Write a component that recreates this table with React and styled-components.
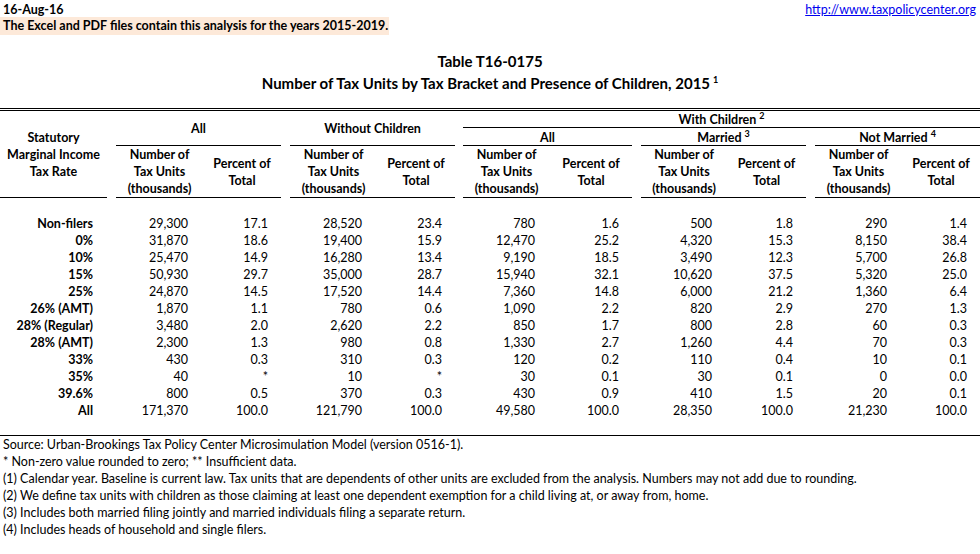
import React from 'react';
import styled, { createGlobalStyle } from 'styled-components';

const Global = createGlobalStyle`
  html, body { margin: 0; padding: 0; background: #fff; }
  body {
    font-family: Lato, "Liberation Sans", sans-serif;
    font-size: 12.5px;
    color: #000;
  }
`;

const Page = styled.div`
  width: 980px;
  height: 554px;
  overflow: hidden;
`;

const TopBar = styled.div`
  display: flex;
  justify-content: space-between;
  align-items: flex-end;
  height: 17px;
  line-height: 14px;
  padding: 0 4px 0 3px;
`;

const DateText = styled.span`
  font-weight: 700;
`;

const SiteLink = styled.a`
  color: #0000ee;
  text-decoration: underline;
`;

const Note = styled.div`
  display: inline-block;
  background: #fde9d9;
  font-weight: 700;
  height: 18px;
  line-height: 17px;
  padding: 0 1px 0 3px;
`;

const TitleBlock = styled.div`
  margin: 15px 0 14px;
  text-align: center;
  font-weight: 700;
  font-size: 15px;
  line-height: 22px;
`;

const Sup = styled.sup`
  font-size: 9px;
  line-height: 0;
  vertical-align: super;
  margin-left: 3px;
`;

const Table = styled.table`
  width: 980px;
  table-layout: fixed;
  border-collapse: separate;
  border-spacing: 0;
  border-top: 3px double #000;
`;

const Col = styled.col`
  width: ${p => p.$w}px;
`;

const HeadRow = styled.tr`
  height: ${p => p.$h}px;
`;

const Th = styled.th`
  padding: 0;
  font-weight: 700;
  text-align: center;
  line-height: ${p => p.$lh || 17}px;
  vertical-align: ${p => p.$va || 'middle'};
  border-bottom: ${p => (p.$rule ? '1px solid #000' : 'none')};
  white-space: nowrap;
`;

const Row = styled.tr`
  height: 17px;
`;

const Label = styled.td`
  padding: 0 14px 0 0;
  font-weight: 700;
  text-align: right;
  line-height: 17px;
  white-space: nowrap;
`;

const Num = styled.td`
  padding: 0 ${p => (p.$pct ? 13 : 15)}px 0 0;
  text-align: right;
  line-height: 17px;
  white-space: nowrap;
`;

const Gap = styled.td`
  padding: 0;
`;

const Footer = styled.div`
  margin-top: 16px;
  border-top: 1px solid #000;
  padding-left: 3px;
  line-height: 17px;
  white-space: nowrap;
`;

const widths = [107, 9, 87, 78, 9, 87, 78, 8, 87, 82, 9, 86, 79, 9, 87, 78];

const rows = [
  ['Non-filers', '29,300', '17.1', '28,520', '23.4', '780', '1.6', '500', '1.8', '290', '1.4'],
  ['0%', '31,870', '18.6', '19,400', '15.9', '12,470', '25.2', '4,320', '15.3', '8,150', '38.4'],
  ['10%', '25,470', '14.9', '16,280', '13.4', '9,190', '18.5', '3,490', '12.3', '5,700', '26.8'],
  ['15%', '50,930', '29.7', '35,000', '28.7', '15,940', '32.1', '10,620', '37.5', '5,320', '25.0'],
  ['25%', '24,870', '14.5', '17,520', '14.4', '7,360', '14.8', '6,000', '21.2', '1,360', '6.4'],
  ['26% (AMT)', '1,870', '1.1', '780', '0.6', '1,090', '2.2', '820', '2.9', '270', '1.3'],
  ['28% (Regular)', '3,480', '2.0', '2,620', '2.2', '850', '1.7', '800', '2.8', '60', '0.3'],
  ['28% (AMT)', '2,300', '1.3', '980', '0.8', '1,330', '2.7', '1,260', '4.4', '70', '0.3'],
  ['33%', '430', '0.3', '310', '0.3', '120', '0.2', '110', '0.4', '10', '0.1'],
  ['35%', '40', '*', '10', '*', '30', '0.1', '30', '0.1', '0', '0.0'],
  ['39.6%', '800', '0.5', '370', '0.3', '430', '0.9', '410', '1.5', '20', '0.1'],
  ['All', '171,370', '100.0', '121,790', '100.0', '49,580', '100.0', '28,350', '100.0', '21,230', '100.0'],
];

const notes = [
  'Source: Urban-Brookings Tax Policy Center Microsimulation Model (version 0516-1).',
  '* Non-zero value rounded to zero; ** Insufficient data.',
  '(1) Calendar year. Baseline is current law. Tax units that are dependents of other units are excluded from the analysis. Numbers may not add due to rounding.',
  '(2) We define tax units with children as those claiming at least one dependent exemption for a child living at, or away from, home.',
  '(3) Includes both married filing jointly and married individuals filing a separate return.',
  '(4) Includes heads of household and single filers.',
];

const NumHead = () => (
  <Th $rule $va="bottom">
    Number of<br />Tax Units<br />(thousands)
  </Th>
);
const PctHead = () => (
  <Th $rule>
    Percent of<br />Total
  </Th>
);
const Pair = () => (
  <>
    <NumHead />
    <PctHead />
  </>
);

const DataRow = ({ r }) => (
  <Row>
    <Label>{r[0]}</Label>
    <Gap />
    <Num>{r[1]}</Num>
    <Num $pct>{r[2]}</Num>
    <Gap />
    <Num>{r[3]}</Num>
    <Num $pct>{r[4]}</Num>
    <Gap />
    <Num>{r[5]}</Num>
    <Num $pct>{r[6]}</Num>
    <Gap />
    <Num>{r[7]}</Num>
    <Num $pct>{r[8]}</Num>
    <Gap />
    <Num>{r[9]}</Num>
    <Num $pct>{r[10]}</Num>
  </Row>
);

export default function App() {
  return (
    <Page>
      <Global />
      <TopBar>
        <DateText>16-Aug-16</DateText>
        <SiteLink href="#">http://www.taxpolicycenter.org</SiteLink>
      </TopBar>
      <Note>The Excel and PDF files contain this analysis for the years 2015-2019.</Note>
      <TitleBlock>
        <div>Table T16-0175</div>
        <div>
          Number of Tax Units by Tax Bracket and Presence of Children, 2015<Sup>1</Sup>
        </div>
      </TitleBlock>
      <Table>
        <colgroup>
          {widths.map((w, i) => (
            <Col key={i} $w={w} />
          ))}
        </colgroup>
        <thead>
          <HeadRow $h={17}>
            <Th rowSpan={3} $rule>
              Statutory<br />Marginal Income<br />Tax Rate
            </Th>
            <Gap rowSpan={3} />
            <Th colSpan={2} rowSpan={2} $rule>All</Th>
            <Gap rowSpan={3} />
            <Th colSpan={2} rowSpan={2} $rule>Without Children</Th>
            <Gap rowSpan={3} />
            <Th colSpan={8} $rule $va="bottom" $lh={15}>
              With Children<Sup>2</Sup>
            </Th>
          </HeadRow>
          <HeadRow $h={18}>
            <Th colSpan={2} $rule $va="bottom" $lh={15}>All</Th>
            <Gap rowSpan={2} />
            <Th colSpan={2} $rule $va="bottom" $lh={15}>
              Married<Sup>3</Sup>
            </Th>
            <Gap rowSpan={2} />
            <Th colSpan={2} $rule $va="bottom" $lh={15}>
              Not Married<Sup>4</Sup>
            </Th>
          </HeadRow>
          <HeadRow $h={51}>
            <Pair />
            <Pair />
            <Pair />
            <Pair />
            <Pair />
          </HeadRow>
        </thead>
        <tbody>
          <Row>
            <Gap colSpan={16} />
          </Row>
          {rows.map((r, i) => (
            <DataRow key={i} r={r} />
          ))}
        </tbody>
      </Table>
      <Footer>
        {notes.map((n, i) => (
          <div key={i}>{n}</div>
        ))}
      </Footer>
    </Page>
  );
}
